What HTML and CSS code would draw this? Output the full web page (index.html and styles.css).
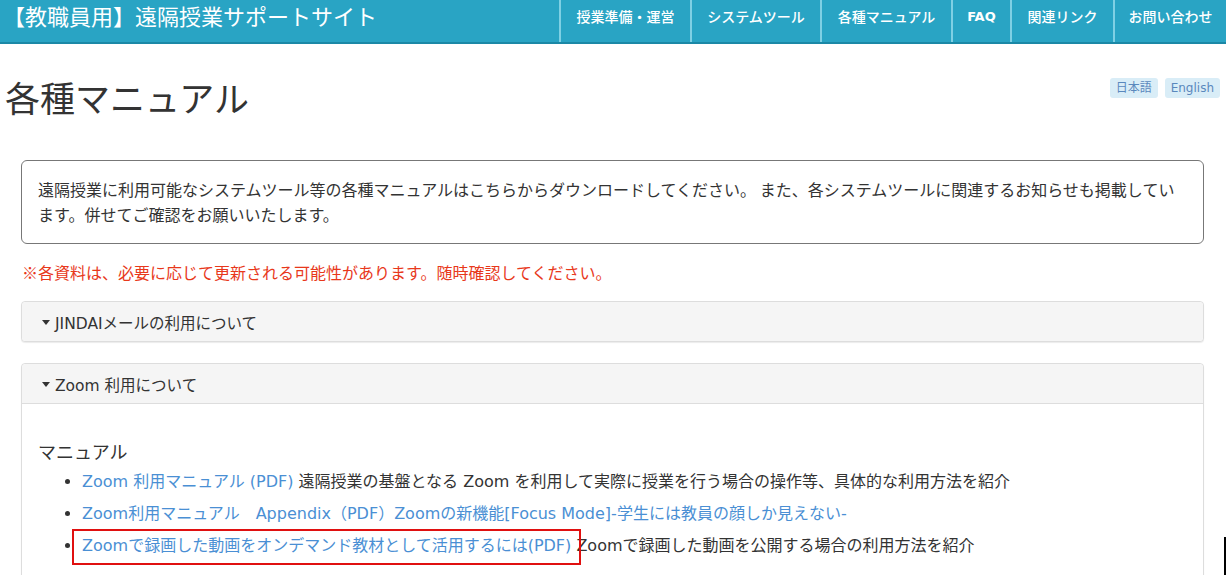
FILE: index.html
```html
<!DOCTYPE html>
<html lang="ja">
<head>
<meta charset="utf-8">
<title>各種マニュアル</title>
<link rel="stylesheet" href="styles.css">
</head>
<body>
<header class="topbar">
  <div class="brand">【教職員用】遠隔授業サポートサイト</div>
  <nav class="nav">
    <a class="nav-item" href="#">授業準備・運営</a>
    <a class="nav-item" href="#">システムツール</a>
    <a class="nav-item" href="#">各種マニュアル</a>
    <a class="nav-item faq" href="#">FAQ</a>
    <a class="nav-item" href="#">関連リンク</a>
    <a class="nav-item" href="#">お問い合わせ</a>
  </nav>
</header>

<div class="title-row">
  <h1 class="page-title">各種マニュアル</h1>
  <div class="langs">
    <span class="lang">日本語</span>
    <span class="lang">English</span>
  </div>
</div>

<main class="content">
  <div class="notice">遠隔授業に利用可能なシステムツール等の各種マニュアルはこちらからダウンロードしてください。 また、各システムツールに関連するお知らせも掲載しています。併せてご確認をお願いいたします。</div>
  <p class="warn">※各資料は、必要に応じて更新される可能性があります。随時確認してください。</p>

  <section class="panel">
    <div class="panel-heading"><span class="caret"></span>JINDAIメールの利用について</div>
  </section>

  <section class="panel open">
    <div class="panel-heading"><span class="caret"></span>Zoom 利用について</div>
    <div class="panel-body">
      <h4 class="sub">マニュアル</h4>
      <ul class="list">
        <li><a href="#">Zoom 利用マニュアル (PDF)</a> 遠隔授業の基盤となる Zoom を利用して実際に授業を行う場合の操作等、具体的な利用方法を紹介</li>
        <li><a href="#">Zoom利用マニュアル　Appendix（PDF）Zoomの新機能[Focus Mode]-学生には教員の顔しか見えない-</a></li>
        <li><a class="marked" href="#">Zoomで録画した動画をオンデマンド教材として活用するには(PDF)</a> Zoomで録画した動画を公開する場合の利用方法を紹介</li>
      </ul>
    </div>
  </section>
</main>
<div class="cursor-line"></div>
</body>
</html>
```

FILE: styles.css
```css
* { box-sizing: border-box; }
html, body { margin: 0; padding: 0; }
body {
  font-family: "DejaVu Sans", "Noto Sans CJK JP", sans-serif;
  font-size: 16px;
  color: #333;
  background: #fff;
  width: 1226px;
  height: 575px;
  overflow: hidden;
  position: relative;
}

.topbar {
  display: flex;
  justify-content: space-between;
  align-items: stretch;
  height: 44px;
  background: #29a4c4;
  border-bottom: 2px solid #1b88a6;
}
.brand {
  font-family: "Noto Sans CJK JP", sans-serif;
  font-size: 22px;
  color: #fff;
  line-height: 31px;
  padding-left: 3px;
}
.nav { display: flex; }
.nav-item {
  display: flex;
  align-items: center;
  justify-content: center;
  height: 42px;
  padding-bottom: 10px;
  color: #fff;
  text-decoration: none;
  font-family: "Noto Sans CJK JP", sans-serif;
  font-size: 14px;
  font-weight: 500;
  border-left: 2px solid #7fd0e4;
}
.nav-item:nth-child(1) { width: 131px; }
.nav-item:nth-child(2) { width: 130px; }
.nav-item:nth-child(3) { width: 131px; }
.nav-item:nth-child(4) { width: 59px; font-family: "DejaVu Sans", sans-serif; font-size: 13px; font-weight: 700; }
.nav-item:nth-child(5) { width: 103px; }
.nav-item:nth-child(6) { width: 113px; }

.title-row {
  display: flex;
  justify-content: space-between;
  align-items: flex-start;
  padding: 0 6px 0 5px;
}
.page-title {
  font-family: "Noto Sans CJK JP", sans-serif;
  font-weight: 400;
  font-size: 35px;
  line-height: 44px;
  margin: 31px 0 0 0;
  color: #333;
}
.langs { display: flex; gap: 7px; margin-top: 34px; }
.lang {
  background: #d9edf7;
  color: #5a88bd;
  font-size: 12px;
  font-family: "DejaVu Sans", "Noto Sans CJK JP", sans-serif;
  line-height: 20px;
  padding: 0 6px;
  border-radius: 3px;
}

.content { padding: 0 22px 0 21px; }

.notice {
  margin-top: 41px;
  border: 1px solid #777;
  border-radius: 6px;
  padding: 16px 16px;
  line-height: 25px;
  font-family: "Noto Sans CJK JP", sans-serif;
  font-size: 16px;
  color: #333;
}
.warn {
  margin: 16px 0 0 1px;
  color: #e8381b;
  font-family: "Noto Sans CJK JP", sans-serif;
  line-height: 24px;
}

.panel {
  border: 1px solid #ddd;
  border-radius: 4px;
  box-shadow: 0 1px 1px rgba(0,0,0,0.08);
  margin-top: 21px;
  background: #fff;
}
.panel:first-of-type { margin-top: 17px; }
.panel-heading {
  background: #f5f5f5;
  height: 39px;
  display: flex;
  align-items: center;
  padding-left: 20px;
  border-radius: 4px;
  color: #333;
  font-size: 15.5px;
}
.open .panel-heading {
  border-bottom: 1px solid #ddd;
  border-radius: 4px 4px 0 0;
  height: 40px;
}
.caret {
  display: inline-block;
  width: 0; height: 0;
  border-left: 4px solid transparent;
  border-right: 4px solid transparent;
  border-top: 5px solid #333;
  margin-right: 5px;
  margin-top: 1px;
}
.panel-body { padding: 15px 15px 30px 16px; }
.sub {
  font-family: "Noto Sans CJK JP", sans-serif;
  font-weight: 400;
  font-size: 18px;
  line-height: 22px;
  margin: 21px 0 0 0;
  color: #333;
}
.list {
  margin: 4px 0 0 0;
  padding-left: 44px;
  line-height: 32px;
}
.list li { font-size: 16px; }
.list a { color: #4a8fd4; text-decoration: none; }
.marked { position: relative; }
.marked::after {
  content: "";
  position: absolute;
  left: -10px; right: -10px;
  top: -7px; bottom: -10px;
  border: 2px solid #e01010;
}
.cursor-line {
  position: absolute;
  left: 1224px;
  top: 537px;
  width: 2px;
  height: 38px;
  background: #000;
}
```
